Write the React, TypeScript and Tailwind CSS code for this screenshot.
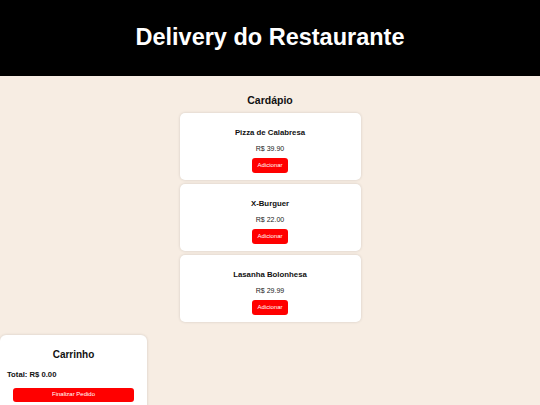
import React from "react";

const items = [
  { name: "Pizza de Calabresa", price: "39.90" },
  { name: "X-Burguer", price: "22.00" },
  { name: "Lasanha Bolonhesa", price: "29.99" },
];

export default function App() {
  return (
    <div className="min-h-[405px] bg-[#f7ede3] font-['Liberation_Sans',Arial,sans-serif] text-[#111]">
      <header className="flex h-[76px] items-center justify-center bg-black">
        <h1 className="text-[23.5px] font-bold text-white">Delivery do Restaurante</h1>
      </header>
      <div className="flex flex-col items-center pt-[18px]">
        <h2 className="text-[10.5px] leading-[13px] font-bold">Cardápio</h2>
        <div className="mt-[6px] flex flex-col gap-[4px]">
          {items.map((it) => (
            <div
              key={it.name}
              className="flex h-[67px] w-[181px] flex-col items-center rounded-[5px] bg-white pt-[14.5px] shadow-[0_0_3px_rgba(0,0,0,0.15)]"
            >
              <div className="text-[7.8px] leading-[10px] font-bold">{it.name}</div>
              <div className="mt-[6px] text-[7px] leading-[9px] text-[#222]">R$ {it.price}</div>
              <button className="mt-[5.5px] block h-[15px] w-[36px] rounded-[3px] bg-[#ff0000] text-[6px] text-white">
                Adicionar
              </button>
            </div>
          ))}
        </div>
      </div>
      <div className="mt-[13px] h-[80px] w-[147px] rounded-[6px] bg-white pt-[14px] shadow-[0_0_3px_rgba(0,0,0,0.15)]">
        <div className="text-center text-[10px] leading-[12px] font-bold">Carrinho</div>
        <div className="mt-[8.5px] pl-[7px] text-[7.7px] leading-[10px] font-bold">Total: R$ 0.00</div>
        <div className="mt-[8px] flex px-[13px]">
          <button className="block h-[14.5px] w-full rounded-[3px] bg-[#ff0000] text-[6px] text-white">Finalizar Pedido</button>
        </div>
      </div>
    </div>
  );
}
